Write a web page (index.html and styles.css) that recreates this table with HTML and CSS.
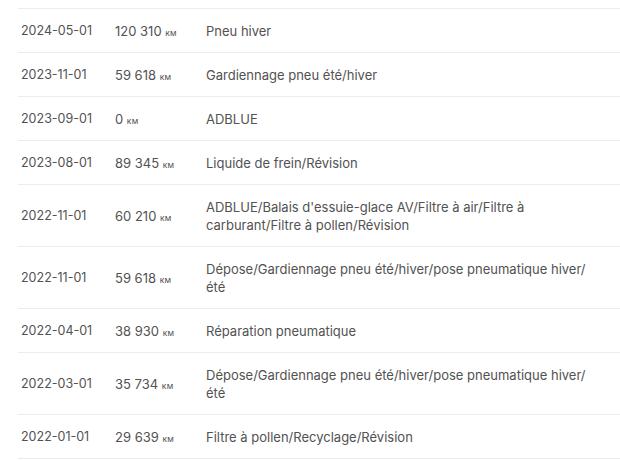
FILE: index.html
```html
<!DOCTYPE html>
<html lang="fr">
<head>
<meta charset="utf-8">
<link rel="stylesheet" href="styles.css">
</head>
<body>
<div class="history">
  <div class="row"><span class="date">2024-05-01</span><span class="km">120 310 <small>км</small></span><span class="desc">Pneu hiver</span></div>
  <div class="row"><span class="date">2023-11-01</span><span class="km">59 618 <small>км</small></span><span class="desc">Gardiennage pneu été/hiver</span></div>
  <div class="row"><span class="date">2023-09-01</span><span class="km">0 <small>км</small></span><span class="desc">ADBLUE</span></div>
  <div class="row"><span class="date">2023-08-01</span><span class="km">89 345 <small>км</small></span><span class="desc">Liquide de frein/Révision</span></div>
  <div class="row"><span class="date">2022-11-01</span><span class="km">60 210 <small>км</small></span><span class="desc">ADBLUE/Balais d'essuie-glace AV/Filtre à air/Filtre à carburant/Filtre à pollen/Révision</span></div>
  <div class="row"><span class="date">2022-11-01</span><span class="km">59 618 <small>км</small></span><span class="desc">Dépose/Gardiennage pneu été/hiver/pose pneumatique hiver/ été</span></div>
  <div class="row"><span class="date">2022-04-01</span><span class="km">38 930 <small>км</small></span><span class="desc">Réparation pneumatique</span></div>
  <div class="row"><span class="date">2022-03-01</span><span class="km">35 734 <small>км</small></span><span class="desc">Dépose/Gardiennage pneu été/hiver/pose pneumatique hiver/ été</span></div>
  <div class="row"><span class="date">2022-01-01</span><span class="km">29 639 <small>км</small></span><span class="desc">Filtre à pollen/Recyclage/Révision</span></div>
</div>
</body>
</html>
```

FILE: styles.css
```css
html, body {
  margin: 0;
  padding: 0;
  background: #ffffff;
}
body {
  font-family: Inter, "Noto Sans", sans-serif;
  font-size: 13px;
  color: #525252;
  padding-top: 8px;
}
.history {
  margin-left: 18px;
  border-top: 1px solid #ececec;
}
.row {
  display: grid;
  grid-template-columns: 94px 91px 394px;
  align-items: center;
  padding: 13px 0 12px 3px;
  line-height: 18px;
  border-bottom: 1px solid #ececec;
}
.date {
  font-size: 12.5px;
}
.km small {
  font-size: 8.5px;
  line-height: 0;
  letter-spacing: 0.2px;
}
```
